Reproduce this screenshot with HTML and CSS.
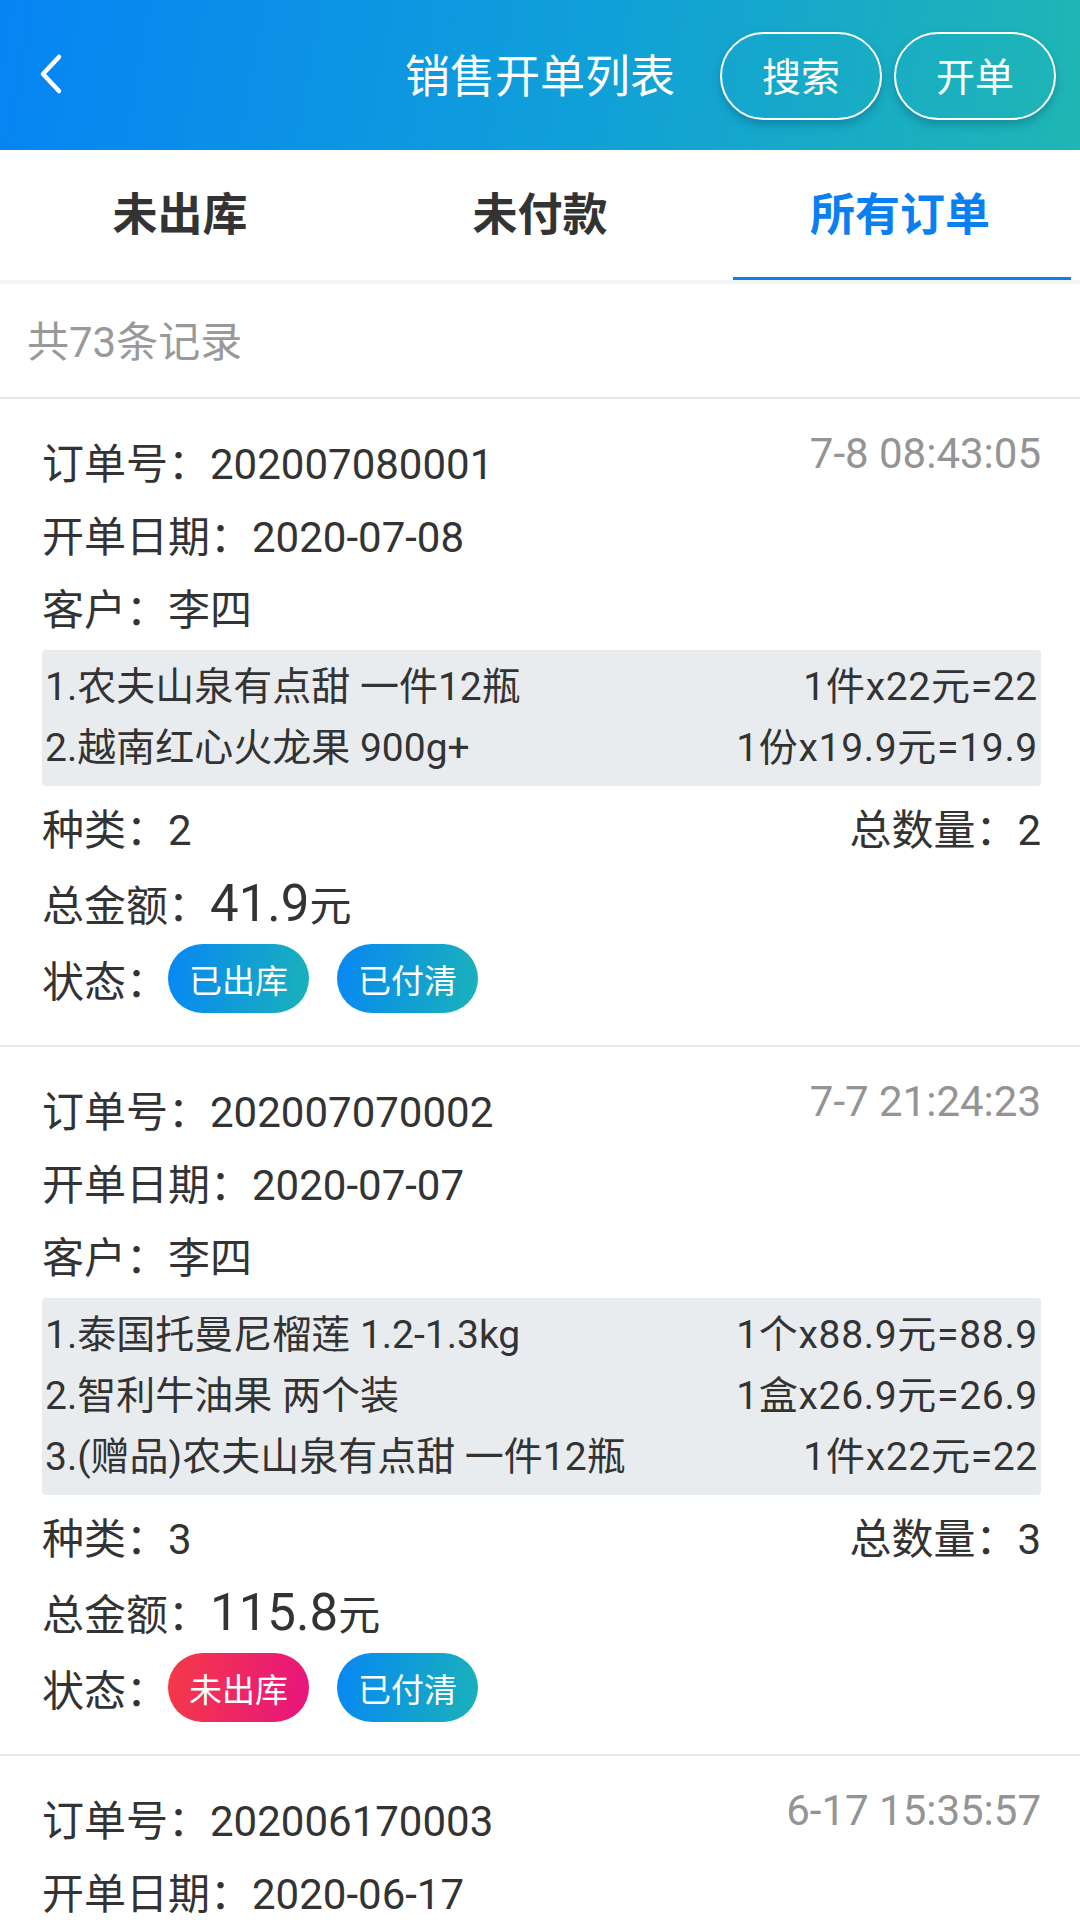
FILE: index.html
```html
<!DOCTYPE html>
<html lang="zh-CN">
  <head>
    <meta charset="UTF-8" />
    <meta name="viewport" content="width=device-width, initial-scale=1.0" />
    <title>销售开单列表</title>
    <link rel="stylesheet" href="styles.css">
  </head>
  <body>
    <header class="topbar">
      <div class="back">
        <svg width="26" height="42" viewBox="0 0 26 42">
          <polyline points="21,4 5,21 21,38" fill="none" stroke="#fff" stroke-width="4.5" stroke-linecap="round" stroke-linejoin="round" />
        </svg>
      </div>
      <h1 class="title">销售开单列表</h1>
      <div class="actions">
        <button class="pill">搜索</button>
        <button class="pill">开单</button>
      </div>
    </header>

    <nav class="tabs">
      <div class="tab">未出库</div>
      <div class="tab">未付款</div>
      <div class="tab active">所有订单</div>
    </nav>

    <div class="count">共73条记录</div>

    <div class="orders">
      <div class="order">
        <div class="row head">
          <span>订单号：202007080001</span>
          <span class="time">7-8 08:43:05</span>
        </div>
        <div class="row">开单日期：2020-07-08</div>
        <div class="row">客户：李四</div>
        <div class="items">
          <div class="item"><span>1.农夫山泉有点甜 一件12瓶</span><span class="calc">1件x22元=22</span></div>
          <div class="item"><span>2.越南红心火龙果 900g+</span><span class="calc">1份x19.9元=19.9</span></div>
        </div>
        <div class="row stats"><span>种类：2</span><span>总数量：2</span></div>
        <div class="row">总金额：<span class="amount">41.9</span>元</div>
        <div class="status">
          <span class="label">状态：</span>
          <span class="tag">已出库</span>
          <span class="tag">已付清</span>
        </div>
      </div>

      <div class="order">
        <div class="row head">
          <span>订单号：202007070002</span>
          <span class="time">7-7 21:24:23</span>
        </div>
        <div class="row">开单日期：2020-07-07</div>
        <div class="row">客户：李四</div>
        <div class="items">
          <div class="item"><span>1.泰国托曼尼榴莲 1.2-1.3kg</span><span class="calc">1个x88.9元=88.9</span></div>
          <div class="item"><span>2.智利牛油果 两个装</span><span class="calc">1盒x26.9元=26.9</span></div>
          <div class="item"><span>3.(赠品)农夫山泉有点甜 一件12瓶</span><span class="calc">1件x22元=22</span></div>
        </div>
        <div class="row stats"><span>种类：3</span><span>总数量：3</span></div>
        <div class="row">总金额：<span class="amount">115.8</span>元</div>
        <div class="status">
          <span class="label">状态：</span>
          <span class="tag red">未出库</span>
          <span class="tag">已付清</span>
        </div>
      </div>

      <div class="order">
        <div class="row head">
          <span>订单号：202006170003</span>
          <span class="time">6-17 15:35:57</span>
        </div>
        <div class="row">开单日期：2020-06-17</div>
      </div>
    </div>
  </body>
</html>
```

FILE: styles.css
```css
body {
  margin: 0;
  width: 1080px;
  height: 1920px;
  overflow: hidden;
  background: #ffffff;
  font-family: Roboto, "Noto Sans CJK SC", sans-serif;
  color: #333;
}

.topbar {
  height: 150px;
  display: grid;
  grid-template-columns: 1fr auto 1fr;
  align-items: center;
  background: linear-gradient(100deg, #0684f4 0%, #10a0d8 55%, #1fb6b4 100%);
}

.back {
  padding-left: 38px;
  display: flex;
  align-items: center;
  margin-top: -2px;
}

.title {
  margin: -3px 0 0;
  font-size: 45px;
  font-weight: normal;
  color: #fff;
}

.actions {
  display: flex;
  justify-content: flex-end;
  gap: 12px;
  padding-right: 24px;
  margin-top: 2px;
}

.pill {
  width: 162px;
  height: 88px;
  border: 2px solid #fff;
  border-radius: 44px;
  background: transparent;
  color: #fff;
  font-family: inherit;
  font-size: 39px;
  box-shadow: 0 5px 8px rgba(0, 40, 80, 0.25);
  padding: 0 0 4px;
}

.tabs {
  display: grid;
  grid-template-columns: repeat(3, 1fr);
  height: 130px;
  border-bottom: 4px solid #f5f5f5;
}

.tab {
  display: flex;
  justify-content: center;
  align-items: center;
  padding-bottom: 8px;
  font-size: 45px;
  font-weight: bold;
  color: #333;
  position: relative;
}

.tab.active {
  color: #0a80f0;
}

.tab.active::after {
  content: "";
  position: absolute;
  left: 13px;
  right: 9px;
  bottom: 0;
  height: 3px;
  background: #0a80f0;
}

.count {
  height: 113px;
  line-height: 117px;
  padding-left: 27px;
  font-size: 42px;
  color: #999;
  border-bottom: 2px solid #e6e6e6;
}

.order {
  padding: 29px 39px 32px 42px;
  border-bottom: 2px solid #e8e8e8;
}

.row {
  font-size: 42px;
  line-height: 73px;
  height: 73px;
  white-space: nowrap;
}

.head,
.stats {
  display: flex;
  justify-content: space-between;
}

.head .time {
  font-size: 42px;
  line-height: 52px;
  color: #949494;
}

.items {
  margin-top: 3px;
  padding: 7px 3px;
  background: #e9ecef;
  border-radius: 4px;
}

.item {
  display: flex;
  justify-content: space-between;
  font-size: 39px;
  line-height: 61px;
  height: 61px;
  white-space: nowrap;
}

.item .calc {
  letter-spacing: 0.7px;
}

.stats {
  margin-top: 8px;
}

.amount {
  font-size: 51px;
}

.status {
  margin-top: 4px;
  height: 69px;
  display: flex;
  align-items: center;
  font-size: 42px;
}

.tag {
  width: 141px;
  height: 69px;
  border-radius: 35px;
  display: flex;
  justify-content: center;
  align-items: center;
  font-size: 33px;
  color: #fff;
  background: linear-gradient(100deg, #0787f4 0%, #1ab2b9 100%);
}

.tag + .tag {
  margin-left: 28px;
}

.tag.red {
  background: linear-gradient(100deg, #f43a47 0%, #e8137f 100%);
}
```
